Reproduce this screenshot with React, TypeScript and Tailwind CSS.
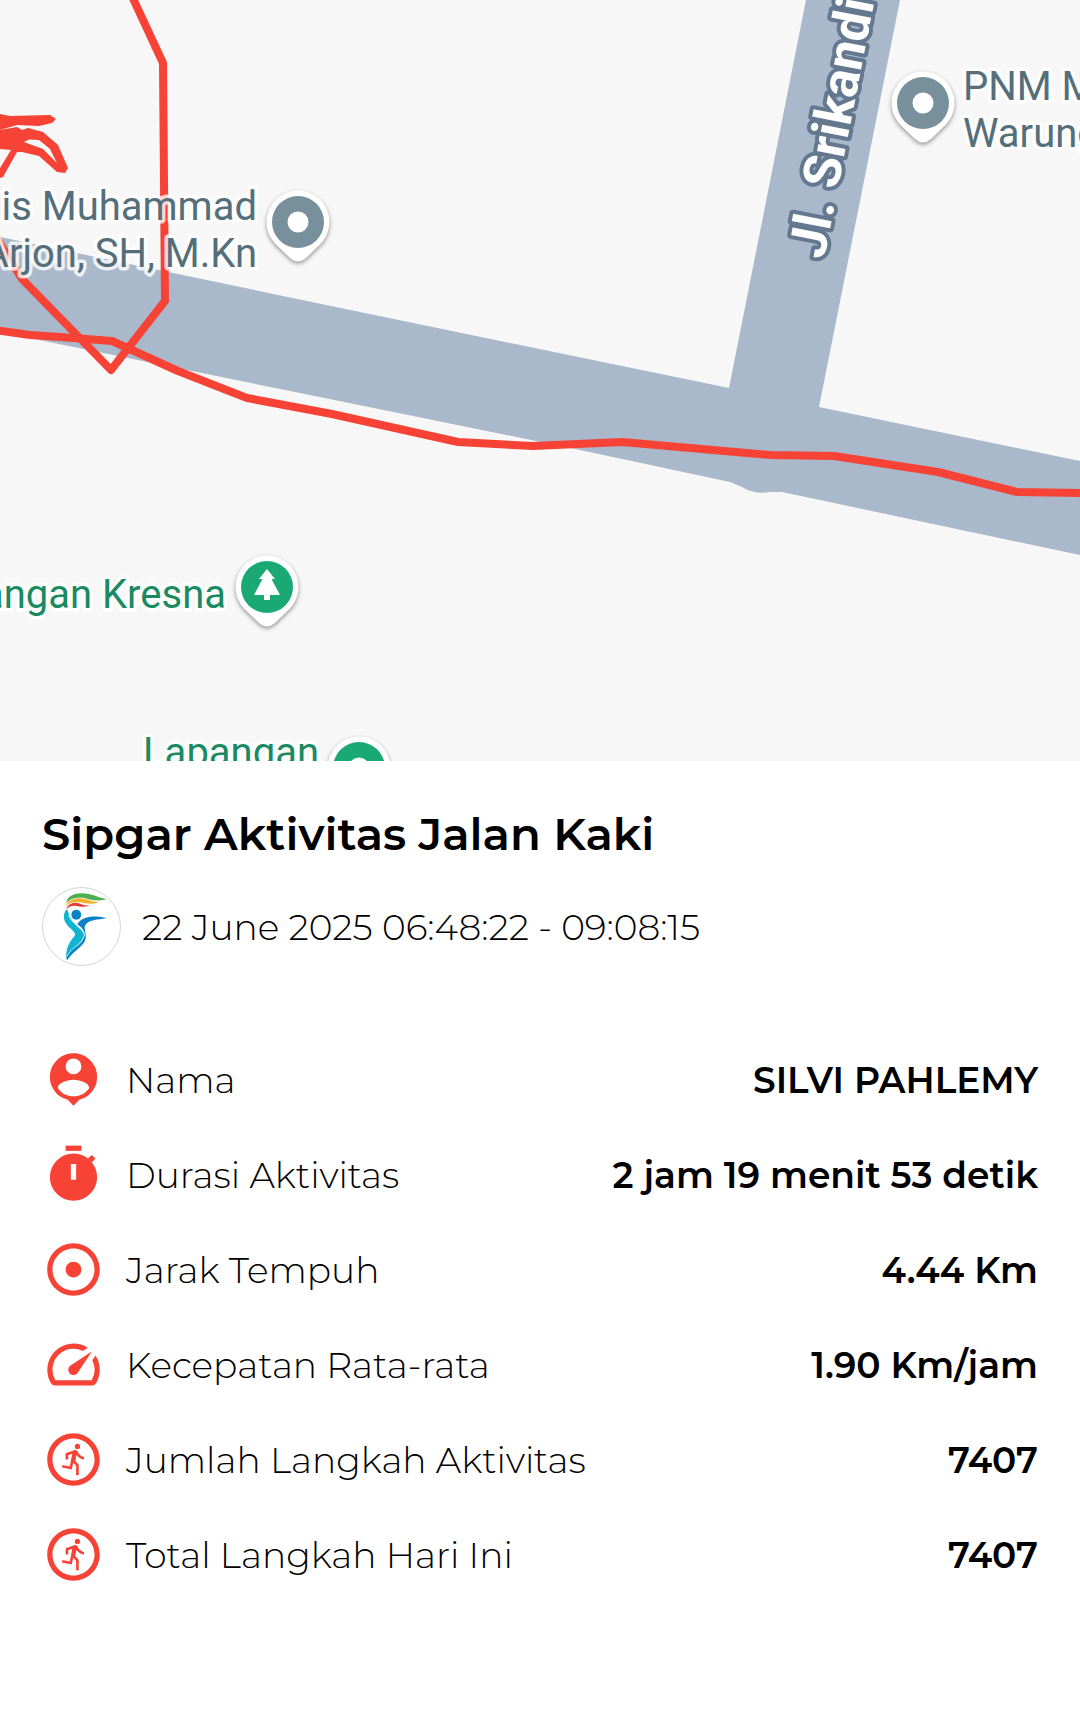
import {
  MdAdjust,
  MdOutlineRunCircle,
  MdSpeed,
} from "react-icons/md";

const PersonPinIcon = ({ className }: { className?: string }) => (
  <svg viewBox="0 0 24 24" fill="currentColor" className={className}>
    <path
      fillRule="evenodd"
      d="M12 2a9 9 0 0 0-2.2 17.73L12 22l2.2-2.27A9 9 0 0 0 12 2zm0 2a3 3 0 1 1 0 6 3 3 0 0 1 0-6zm6 11.2c-1.29 1.94-3.5 3.22-6 3.22s-4.71-1.28-6-3.22c.03-1.99 4-3.08 6-3.08s5.97 1.09 6 3.08z"
    />
  </svg>
);

const StopwatchIcon = ({ className }: { className?: string }) => (
  <svg viewBox="0 0 24 24" fill="currentColor" className={className}>
    <path d="M9 1h6v2H9z" />
    <path d="M18.95 4.6l1.4 1.35-1.3 1.35-1.6-1.3z" />
    <path fillRule="evenodd" d="M12 4a9 9 0 1 0 0 18 9 9 0 0 0 0-18zm-1 4h2v6h-2z" />
  </svg>
);

const Logo = () => (
  <svg viewBox="12 12 236 236" className="size-[79px] rounded-full border border-gray-300">
    <path fill="#4caf50" d="M83 58C86 38 105 28 130 28C160 28 185 42 207 46C185 54 160 50 140 43C115 38 95 45 83 58z" />
    <path fill="#f5b02e" d="M82 68C88 46 115 40 140 45C160 52 170 54 183 56C160 64 145 60 125 56C105 53 90 58 82 68z" />
    <path fill="#e53935" d="M83 79C88 60 105 54 122 59C135 66 145 66 156 66C140 72 125 69 115 67C100 65 90 70 83 79z" />
    <circle cx="114" cy="94" r="15" fill="#0b82c5" />
    <path fill="#0fb5d0" d="M83 79C70 98 76 116 92 132C108 146 114 152 108 160C92 178 80 200 84 232C92 206 134 188 138 154C136 138 96 124 88 80z" />
    <path fill="#0b82c5" d="M117 123C134 96 170 96 208 104C178 110 152 108 141 127C137 134 144 146 143 165C140 190 106 202 85 234C84 214 98 204 116 192C130 180 138 168 139 152C138 140 128 130 117 123z" />
    <path fill="none" stroke="#fff" strokeWidth="2" d="M90 96C98 122 140 136 139 156C134 184 98 192 86 222" />
  </svg>
);

interface IPinProps {
  x: number;
  y: number;
  color: string;
  tree?: boolean;
}

const Pin = ({ x, y, color, tree = false }: IPinProps) => (
  <g transform={`translate(${x} ${y})`}>
    <path
      className="drop-shadow-[0_2px_2px_rgba(0,0,0,0.4)]"
      fill="#fff"
      d="M0-31.5A31.5 31.5 0 0 1 23 21.5L8 36Q0 43-8 36L-23 21.5A31.5 31.5 0 0 1 0-31.5z"
    />
    <circle r="26" fill={color} />
    {tree ? (
      <path fill="#fff" d="M0-18l8 10H4.5L13 8H3v5h-6V8h-10L-4.5-8H-8z" />
    ) : (
      <circle r="10.5" fill="#fff" />
    )}
  </g>
);

const LABEL =
  "font-[Roboto,sans-serif] text-[40px] stroke-white stroke-[7px] [paint-order:stroke] [stroke-linejoin:round] [stroke-opacity:0.8]";

const ActivityMap = () => (
  <svg
    viewBox="0 0 1080 761"
    preserveAspectRatio="xMidYMid slice"
    className="block aspect-[1080/761] w-full bg-[#f7f7f7]"
  >
    {/* roads */}
    <path
      fill="#a9b8ca"
      d="M0 237L360 312 729 388 806 0H900L819 407 1080 461V555L782 492 770 492Q755 495 742 487L730 482 580 450 300 393 0 332z"
    />
    {/* walked route */}
    <g fill="none" stroke="#f64336" strokeWidth="8" strokeLinejoin="round">
      <path d="M130-8L163 63 165 301 111 370 22 279-6 234" />
      <path d="M-5 330L30 335 60 337 112 341 178 371 247 398 332 414 458 442 533 446 622 442 770 455 834 456 938 472 1017 492 1085 493" />
    </g>
    <g fill="#f64336">
      <path d="M0 114L10 116 50 115 56 119 52 123 39 126 17 125 0 130z" />
      <path
        fillRule="evenodd"
        d="M0 130L17 127 22 130 28 128 43 132 58 145 68 168 65 173 57 172 39 156 22 152 17 152 3 177 0 178V168L11 150 0 149zM24 142L29 139.5 39 140 50 149 57 163 43 149z"
      />
    </g>
    <Pin x={298} y={222} color="#78909c" />
    <Pin x={923} y={103} color="#78909c" />
    <Pin x={267} y={587} color="#1aa974" tree />
    <Pin x={359} y={768} color="#1aa974" />
    <g fill="#546e7a" className={LABEL}>
      <text x="257" y="220" textAnchor="end">is Muhammad</text>
      <text x="257" y="267" textAnchor="end">Arjon, SH, M.Kn</text>
      <text x="963" y="100">PNM M</text>
      <text x="963" y="147">Warung</text>
    </g>
    <g fill="#1a8a62" className={LABEL}>
      <text x="226" y="608" textAnchor="end">Lapangan Kresna</text>
      <text x="319" y="766" textAnchor="end">Lapangan</text>
    </g>
    <text
      transform="translate(824 260) rotate(-79)"
      fill="#fff"
      className="font-[Roboto,sans-serif] text-[52px] font-bold stroke-[#64788f] stroke-[8px] [paint-order:stroke] [stroke-linejoin:round]"
    >
      Jl. Srikandi
    </text>
  </svg>
);

const stats = [
  { icon: PersonPinIcon, label: "Nama", value: "SILVI PAHLEMY" },
  { icon: StopwatchIcon, label: "Durasi Aktivitas", value: "2 jam 19 menit 53 detik" },
  { icon: MdAdjust, label: "Jarak Tempuh", value: "4.44 Km" },
  { icon: MdSpeed, label: "Kecepatan Rata-rata", value: "1.90 Km/jam" },
  { icon: MdOutlineRunCircle, label: "Jumlah Langkah Aktivitas", value: "7407" },
  { icon: MdOutlineRunCircle, label: "Total Langkah Hari Ini", value: "7407" },
];

const App = () => {
  return (
    <main className="min-h-screen bg-white font-[Montserrat,Inter,sans-serif] text-black">
      <ActivityMap />
      <section className="px-[42px] pt-[47px] pb-20">
        <h1 className="text-[45px] leading-[52px] font-semibold">
          Sipgar Aktivitas Jalan Kaki
        </h1>
        <div className="mt-[27px] flex items-center gap-[21px]">
          <Logo />
          <time className="text-[36px] leading-10 font-light">
            22 June 2025 06:48:22 - 09:08:15
          </time>
        </div>
        <dl className="mt-[82px] flex flex-col gap-8">
          {stats.map(({ icon: Icon, label, value }) => (
            <div key={label} className="flex h-[63px] items-center justify-between">
              <dt className="flex items-center gap-[21px] text-[36px] leading-[38px] font-light">
                <Icon className="size-[63px] text-[#f64336]" />
                {label}
              </dt>
              <dd className="text-[36px] leading-[38px] font-semibold">{value}</dd>
            </div>
          ))}
        </dl>
      </section>
    </main>
  );
};

export default App;
